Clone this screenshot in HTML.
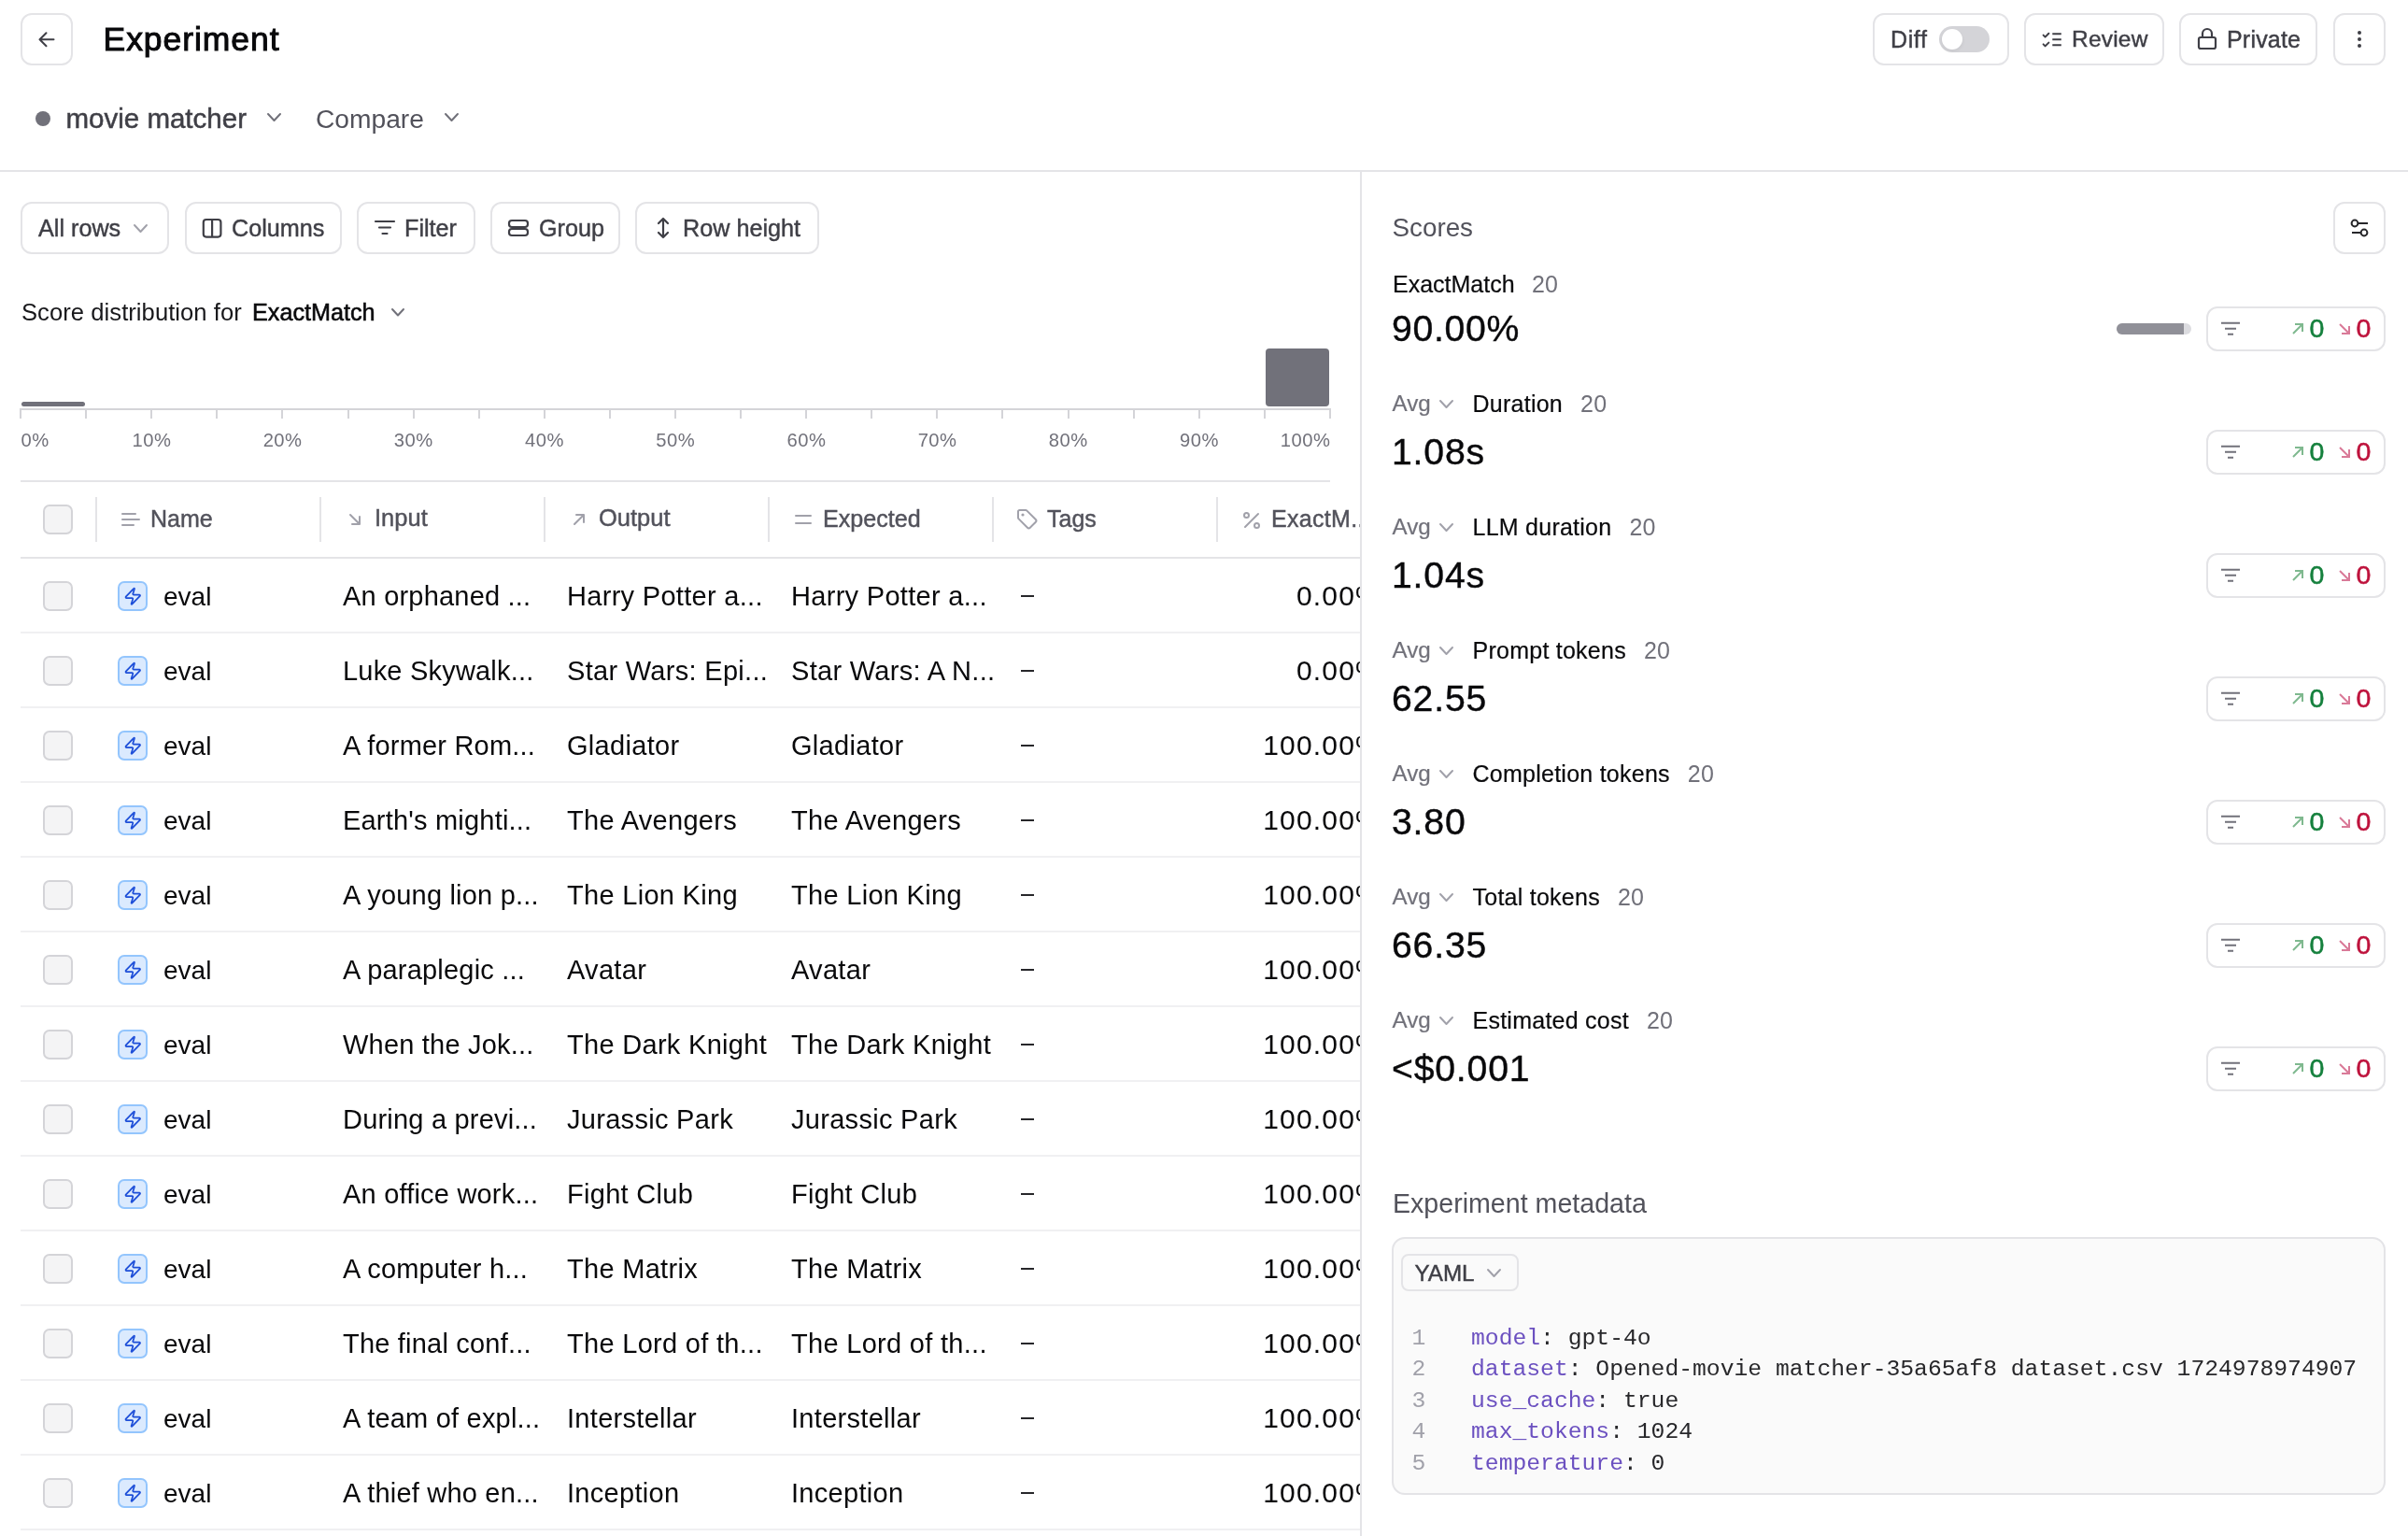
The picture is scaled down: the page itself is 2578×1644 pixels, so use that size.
<!DOCTYPE html>
<html><head><meta charset="utf-8"><title>Experiment</title>
<style>
html,body{margin:0;padding:0;background:#fff;}
body{width:2578px;height:1644px;position:relative;overflow:hidden;font-family:'Liberation Sans', sans-serif;}
.t{position:absolute;line-height:1;white-space:nowrap;}
#w{position:absolute;left:0;top:0;width:2578px;height:1644px;will-change:transform;}
.b{position:absolute;}
</style></head><body><div id="w">
<div class="b" style="left:22px;top:14px;width:56px;height:56px;border:2px solid #e4e4e7;border-radius:12px;box-sizing:border-box;"></div>
<svg class="b" style="left:39px;top:32px;" width="21" height="21" viewBox="0 0 21 21" fill="none"><path d="M18.5 10.2 H3.5 M10.5 3.2 L3.5 10.2 L10.5 17.2" stroke="#3f3f46" stroke-width="2" stroke-linecap="round" stroke-linejoin="round"/></svg>
<div class="t" style="left:110.50px;top:24.94px;font-size:35.5px;color:#09090b;font-weight:400;letter-spacing:0.95px;-webkit-text-stroke:1.0px #09090b;font-family:'Liberation Sans', sans-serif;">Experiment</div>
<div class="b" style="left:2005px;top:14px;width:146px;height:56px;border:2px solid #e4e4e7;border-radius:12px;box-sizing:border-box;"></div>
<div class="t" style="left:2024.00px;top:29.93px;font-size:25px;color:#3f3f46;font-weight:400;letter-spacing:0.6px;-webkit-text-stroke:0.45px #3f3f46;font-family:'Liberation Sans', sans-serif;">Diff</div>
<div class="b" style="left:2076px;top:28px;width:54px;height:28px;background:#d4d4d8;border-radius:14px;"></div>
<div class="b" style="left:2079px;top:31px;width:22px;height:22px;background:#fff;border-radius:50%;box-shadow:0 2px 4px rgba(0,0,0,0.06);"></div>
<div class="b" style="left:2167px;top:14px;width:150px;height:56px;border:2px solid #e4e4e7;border-radius:12px;box-sizing:border-box;"></div>
<svg class="b" style="left:2184px;top:33px;" width="26" height="20" viewBox="0 0 26 20" fill="none"><path d="M3.6 4.6 L5.6 6.6 L9.4 2.8 M3.6 14.4 L5.6 16.4 L9.4 12.6" stroke="#3f3f46" stroke-width="2" stroke-linecap="round" stroke-linejoin="round"/><path d="M13.3 3.3 H22.8 M13.3 9.2 H22.8 M13.3 15.3 H22.8" stroke="#3f3f46" stroke-width="2"/></svg>
<div class="t" style="left:2218.00px;top:30.36px;font-size:24.5px;color:#3f3f46;font-weight:400;letter-spacing:0.2px;-webkit-text-stroke:0.45px #3f3f46;font-family:'Liberation Sans', sans-serif;">Review</div>
<div class="b" style="left:2333px;top:14px;width:148px;height:56px;border:2px solid #e4e4e7;border-radius:12px;box-sizing:border-box;"></div>
<svg class="b" style="left:2351px;top:29px;" width="24" height="26" viewBox="0 0 24 26" fill="none"><rect x="3" y="11" width="18" height="12" rx="2" stroke="#3f3f46" stroke-width="2.2"/><path d="M7 11 V7 a5 5 0 0 1 10 0 V11" stroke="#3f3f46" stroke-width="2.2"/></svg>
<div class="t" style="left:2384.00px;top:29.93px;font-size:25px;color:#3f3f46;font-weight:400;letter-spacing:0.2px;-webkit-text-stroke:0.45px #3f3f46;font-family:'Liberation Sans', sans-serif;">Private</div>
<div class="b" style="left:2498px;top:14px;width:56px;height:56px;border:2px solid #e4e4e7;border-radius:12px;box-sizing:border-box;"></div>
<div class="b" style="left:2523.8px;top:33.0px;width:4.4px;height:4.4px;background:#3f3f46;border-radius:50%;"></div>
<div class="b" style="left:2523.8px;top:39.9px;width:4.4px;height:4.4px;background:#3f3f46;border-radius:50%;"></div>
<div class="b" style="left:2523.8px;top:46.9px;width:4.4px;height:4.4px;background:#3f3f46;border-radius:50%;"></div>
<div class="b" style="left:38px;top:119px;width:16px;height:16px;background:#71717a;border-radius:50%;"></div>
<div class="t" style="left:70.50px;top:111.72px;font-size:29.5px;color:#3f3f46;font-weight:400;letter-spacing:0px;-webkit-text-stroke:0.5px #3f3f46;font-family:'Liberation Sans', sans-serif;">movie matcher</div>
<svg class="b" style="left:285px;top:120px;" width="17" height="11" viewBox="0 0 17 11" fill="none"><path d="M2 2 L8.5 9 L15 2" stroke="#71717a" stroke-width="2" stroke-linecap="round" stroke-linejoin="round"/></svg>
<div class="t" style="left:338.00px;top:112.82px;font-size:28.2px;color:#52525b;font-weight:400;letter-spacing:0px;font-family:'Liberation Sans', sans-serif;">Compare</div>
<svg class="b" style="left:475px;top:120px;" width="17" height="11" viewBox="0 0 17 11" fill="none"><path d="M2 2 L8.5 9 L15 2" stroke="#71717a" stroke-width="2" stroke-linecap="round" stroke-linejoin="round"/></svg>
<div class="b" style="left:0px;top:182px;width:2578px;height:2px;background:#e4e4e7;"></div>
<div class="b" style="left:1456px;top:184px;width:2px;height:1460px;background:#e4e4e7;"></div>
<div class="b" style="left:22px;top:216px;width:159px;height:56px;border:2px solid #e4e4e7;border-radius:12px;box-sizing:border-box;"></div>
<div class="t" style="left:41.00px;top:231.86px;font-size:25.2px;color:#3f3f46;font-weight:400;letter-spacing:0px;-webkit-text-stroke:0.45px #3f3f46;font-family:'Liberation Sans', sans-serif;">All rows</div>
<svg class="b" style="left:142px;top:239px;" width="17" height="11" viewBox="0 0 17 11" fill="none"><path d="M2 2 L8.5 9 L15 2" stroke="#a1a1aa" stroke-width="2" stroke-linecap="round" stroke-linejoin="round"/></svg>
<div class="b" style="left:198px;top:216px;width:168px;height:56px;border:2px solid #e4e4e7;border-radius:12px;box-sizing:border-box;"></div>
<svg class="b" style="left:215px;top:232px;" width="24" height="24" viewBox="0 0 24 24" fill="none"><rect x="2.8" y="3" width="18.6" height="18.6" rx="3" stroke="#3f3f46" stroke-width="2.2"/><path d="M12.1 3 V21.6" stroke="#3f3f46" stroke-width="2.2"/></svg>
<div class="t" style="left:248.00px;top:231.86px;font-size:25.2px;color:#3f3f46;font-weight:400;letter-spacing:0px;-webkit-text-stroke:0.45px #3f3f46;font-family:'Liberation Sans', sans-serif;">Columns</div>
<div class="b" style="left:382px;top:216px;width:127px;height:56px;border:2px solid #e4e4e7;border-radius:12px;box-sizing:border-box;"></div>
<svg class="b" style="left:400px;top:235px;" width="24" height="18" viewBox="0 0 24 18" fill="none"><path d="M2 2 H22 M6 8.5 H18 M9.5 15 H14.5" stroke="#3f3f46" stroke-width="2.2" stroke-linecap="round"/></svg>
<div class="t" style="left:433.00px;top:231.86px;font-size:25.2px;color:#3f3f46;font-weight:400;letter-spacing:0px;-webkit-text-stroke:0.45px #3f3f46;font-family:'Liberation Sans', sans-serif;">Filter</div>
<div class="b" style="left:525px;top:216px;width:139px;height:56px;border:2px solid #e4e4e7;border-radius:12px;box-sizing:border-box;"></div>
<svg class="b" style="left:542px;top:233px;" width="26" height="22" viewBox="0 0 26 22" fill="none"><rect x="3" y="3" width="20" height="7" rx="3" stroke="#3f3f46" stroke-width="2.2"/><rect x="3" y="12" width="20" height="7" rx="3" stroke="#3f3f46" stroke-width="2.2"/></svg>
<div class="t" style="left:577.00px;top:231.86px;font-size:25.2px;color:#3f3f46;font-weight:400;letter-spacing:0px;-webkit-text-stroke:0.45px #3f3f46;font-family:'Liberation Sans', sans-serif;">Group</div>
<div class="b" style="left:680px;top:216px;width:197px;height:56px;border:2px solid #e4e4e7;border-radius:12px;box-sizing:border-box;"></div>
<svg class="b" style="left:701px;top:231px;" width="18" height="26" viewBox="0 0 18 26" fill="none"><path d="M9 3 V23 M4 8 L9 3 L14 8 M4 18 L9 23 L14 18" stroke="#3f3f46" stroke-width="2.2" stroke-linecap="round" stroke-linejoin="round"/></svg>
<div class="t" style="left:731.00px;top:231.86px;font-size:25.2px;color:#3f3f46;font-weight:400;letter-spacing:0px;-webkit-text-stroke:0.45px #3f3f46;font-family:'Liberation Sans', sans-serif;">Row height</div>
<div class="t" style="left:23.00px;top:321.62px;font-size:25.6px;color:#18181b;font-weight:400;letter-spacing:0.05px;font-family:'Liberation Sans', sans-serif;">Score distribution for</div>
<div class="t" style="left:270.00px;top:321.96px;font-size:25.2px;color:#09090b;font-weight:400;letter-spacing:0px;-webkit-text-stroke:0.55px #09090b;font-family:'Liberation Sans', sans-serif;">ExactMatch</div>
<svg class="b" style="left:418px;top:329px;" width="16" height="10.5" viewBox="0 0 16 10.5" fill="none"><path d="M2 2 L8.0 8.5 L14 2" stroke="#71717a" stroke-width="2" stroke-linecap="round" stroke-linejoin="round"/></svg>
<div class="b" style="left:22px;top:437px;width:1403px;height:2px;background:#d4d4d8;"></div>
<div class="b" style="left:21px;top:437px;width:2px;height:11px;background:#d4d4d8;"></div>
<div class="b" style="left:91px;top:437px;width:2px;height:11px;background:#d4d4d8;"></div>
<div class="b" style="left:161px;top:437px;width:2px;height:11px;background:#d4d4d8;"></div>
<div class="b" style="left:231px;top:437px;width:2px;height:11px;background:#d4d4d8;"></div>
<div class="b" style="left:301px;top:437px;width:2px;height:11px;background:#d4d4d8;"></div>
<div class="b" style="left:372px;top:437px;width:2px;height:11px;background:#d4d4d8;"></div>
<div class="b" style="left:442px;top:437px;width:2px;height:11px;background:#d4d4d8;"></div>
<div class="b" style="left:512px;top:437px;width:2px;height:11px;background:#d4d4d8;"></div>
<div class="b" style="left:582px;top:437px;width:2px;height:11px;background:#d4d4d8;"></div>
<div class="b" style="left:652px;top:437px;width:2px;height:11px;background:#d4d4d8;"></div>
<div class="b" style="left:722px;top:437px;width:2px;height:11px;background:#d4d4d8;"></div>
<div class="b" style="left:792px;top:437px;width:2px;height:11px;background:#d4d4d8;"></div>
<div class="b" style="left:862px;top:437px;width:2px;height:11px;background:#d4d4d8;"></div>
<div class="b" style="left:932px;top:437px;width:2px;height:11px;background:#d4d4d8;"></div>
<div class="b" style="left:1002px;top:437px;width:2px;height:11px;background:#d4d4d8;"></div>
<div class="b" style="left:1072px;top:437px;width:2px;height:11px;background:#d4d4d8;"></div>
<div class="b" style="left:1143px;top:437px;width:2px;height:11px;background:#d4d4d8;"></div>
<div class="b" style="left:1213px;top:437px;width:2px;height:11px;background:#d4d4d8;"></div>
<div class="b" style="left:1283px;top:437px;width:2px;height:11px;background:#d4d4d8;"></div>
<div class="b" style="left:1353px;top:437px;width:2px;height:11px;background:#d4d4d8;"></div>
<div class="b" style="left:1423px;top:437px;width:2px;height:11px;background:#d4d4d8;"></div>
<div class="b" style="left:23px;top:429.5px;width:68px;height:5.5px;background:#71717a;border-radius:3px;"></div>
<div class="b" style="left:1355px;top:373px;width:68px;height:62px;background:#71717a;border-radius:4px;"></div>
<div class="t" style="left:22.50px;top:461.00px;font-size:20.2px;color:#71717a;font-weight:400;letter-spacing:0.5px;font-family:'Liberation Sans', sans-serif;">0%</div>
<div class="t" style="left:62.4px;width:200px;text-align:center;top:461.00px;font-size:20.2px;letter-spacing:0.5px;color:#71717a;">10%</div>
<div class="t" style="left:202.6px;width:200px;text-align:center;top:461.00px;font-size:20.2px;letter-spacing:0.5px;color:#71717a;">20%</div>
<div class="t" style="left:342.8px;width:200px;text-align:center;top:461.00px;font-size:20.2px;letter-spacing:0.5px;color:#71717a;">30%</div>
<div class="t" style="left:483.0px;width:200px;text-align:center;top:461.00px;font-size:20.2px;letter-spacing:0.5px;color:#71717a;">40%</div>
<div class="t" style="left:623.2px;width:200px;text-align:center;top:461.00px;font-size:20.2px;letter-spacing:0.5px;color:#71717a;">50%</div>
<div class="t" style="left:763.4px;width:200px;text-align:center;top:461.00px;font-size:20.2px;letter-spacing:0.5px;color:#71717a;">60%</div>
<div class="t" style="left:903.6px;width:200px;text-align:center;top:461.00px;font-size:20.2px;letter-spacing:0.5px;color:#71717a;">70%</div>
<div class="t" style="left:1043.8px;width:200px;text-align:center;top:461.00px;font-size:20.2px;letter-spacing:0.5px;color:#71717a;">80%</div>
<div class="t" style="left:1184.0px;width:200px;text-align:center;top:461.00px;font-size:20.2px;letter-spacing:0.5px;color:#71717a;">90%</div>
<div class="t" style="left:1124.5px;width:300px;text-align:right;top:461.00px;font-size:20.2px;letter-spacing:0.5px;color:#71717a;">100%</div>
<div class="b" style="left:22px;top:514px;width:1402px;height:2px;background:#e4e4e7;"></div>
<div class="b" style="left:46px;top:540px;width:32px;height:32px;border:2px solid #d4d4d8;background:#f4f4f5;border-radius:7px;box-sizing:border-box;"></div>
<div class="b" style="left:102px;top:532px;width:2px;height:48px;background:#e4e4e7;"></div>
<div class="b" style="left:342px;top:532px;width:2px;height:48px;background:#e4e4e7;"></div>
<div class="b" style="left:582px;top:532px;width:2px;height:48px;background:#e4e4e7;"></div>
<div class="b" style="left:822px;top:532px;width:2px;height:48px;background:#e4e4e7;"></div>
<div class="b" style="left:1062px;top:532px;width:2px;height:48px;background:#e4e4e7;"></div>
<div class="b" style="left:1302px;top:532px;width:2px;height:48px;background:#e4e4e7;"></div>
<svg class="b" style="left:128px;top:547px;" width="24" height="18" viewBox="0 0 24 18" fill="none"><path d="M3 3 H17 M3 9 H21 M3 15 H15" stroke="#a1a1aa" stroke-width="2" stroke-linecap="round"/></svg>
<div class="t" style="left:161.00px;top:542.83px;font-size:25px;color:#52525b;font-weight:400;letter-spacing:0px;-webkit-text-stroke:0.45px #52525b;font-family:'Liberation Sans', sans-serif;">Name</div>
<svg class="b" style="left:371px;top:547px;" width="18" height="18" viewBox="0 0 18 18" fill="none"><path d="M4 4 L14 14 M14 6 V14 H6" stroke="#a1a1aa" stroke-width="2" stroke-linecap="round" stroke-linejoin="round"/></svg>
<div class="t" style="left:401.00px;top:542.41px;font-size:25.5px;color:#52525b;font-weight:400;letter-spacing:0px;-webkit-text-stroke:0.45px #52525b;font-family:'Liberation Sans', sans-serif;">Input</div>
<svg class="b" style="left:611px;top:547px;" width="18" height="18" viewBox="0 0 18 18" fill="none"><path d="M4 14 L14 4 M6 4 H14 V12" stroke="#a1a1aa" stroke-width="2" stroke-linecap="round" stroke-linejoin="round"/></svg>
<div class="t" style="left:641.00px;top:542.41px;font-size:25.5px;color:#52525b;font-weight:400;letter-spacing:0px;-webkit-text-stroke:0.45px #52525b;font-family:'Liberation Sans', sans-serif;">Output</div>
<svg class="b" style="left:849px;top:548px;" width="22" height="16" viewBox="0 0 22 16" fill="none"><path d="M3 4 H19 M3 12 H19" stroke="#a1a1aa" stroke-width="2" stroke-linecap="round"/></svg>
<div class="t" style="left:881.00px;top:542.75px;font-size:25.1px;color:#52525b;font-weight:400;letter-spacing:0px;-webkit-text-stroke:0.45px #52525b;font-family:'Liberation Sans', sans-serif;">Expected</div>
<svg class="b" style="left:1087px;top:543px;" width="26" height="26" viewBox="0 0 26 26" fill="none"><path d="M3 4.5 V11 a2 2 0 0 0 .6 1.4 L13 21.8 a2 2 0 0 0 2.8 0 L21.8 15.8 a2 2 0 0 0 0-2.8 L12.4 3.6 A2 2 0 0 0 11 3 H4.5 A1.5 1.5 0 0 0 3 4.5 Z" stroke="#a1a1aa" stroke-width="2" stroke-linejoin="round"/><circle cx="8" cy="8" r="1.6" fill="#a1a1aa"/></svg>
<div class="t" style="left:1121.00px;top:542.83px;font-size:25px;color:#52525b;font-weight:400;letter-spacing:0px;-webkit-text-stroke:0.45px #52525b;font-family:'Liberation Sans', sans-serif;">Tags</div>
<svg class="b" style="left:1328px;top:545px;" width="24" height="24" viewBox="0 0 24 24" fill="none"><path d="M19 5 L5 19" stroke="#a1a1aa" stroke-width="2" stroke-linecap="round"/><circle cx="6.5" cy="6.5" r="2.5" stroke="#a1a1aa" stroke-width="2"/><circle cx="17.5" cy="17.5" r="2.5" stroke="#a1a1aa" stroke-width="2"/></svg>
<div class="b" style="left:1302px;top:520px;width:154px;height:70px;overflow:hidden;"><div class="t" style="left:59.00px;top:22.83px;font-size:25px;color:#52525b;font-weight:400;letter-spacing:0.3px;-webkit-text-stroke:0.45px #52525b;font-family:'Liberation Sans', sans-serif;">ExactM...</div></div>
<div class="b" style="left:22px;top:596px;width:1434px;height:2px;background:#e4e4e7;"></div>
<div class="b" style="left:46px;top:622px;width:32px;height:32px;border:2px solid #d4d4d8;background:#f4f4f5;border-radius:7px;box-sizing:border-box;"></div>
<div class="b" style="left:126px;top:622px;width:32px;height:32px;border:2px solid #93c5fd;background:#dbeafe;border-radius:7px;box-sizing:border-box;"></div>
<svg class="b" style="left:132.1px;top:628.2px" width="20.6" height="20.6" viewBox="0 0 24 24" fill="none"><path d="M4 14a1 1 0 0 1-.78-1.63l9.9-10.2a.5.5 0 0 1 .86.46l-1.920 6.02A1 1 0 0 0 13 10h7a1 1 0 0 1 .78 1.63l-9.9 10.2a.5.5 0 0 1-.86-.46l1.92-6.020A1 1 0 0 0 11 14z" stroke="#1d4ed8" stroke-width="2.05" stroke-linecap="round" stroke-linejoin="round"/></svg>
<div class="t" style="left:175.00px;top:624.59px;font-size:28px;color:#09090b;font-weight:400;letter-spacing:0px;font-family:'Liberation Sans', sans-serif;">eval</div>
<div class="t" style="left:367.00px;top:623.75px;font-size:29.0px;color:#09090b;font-weight:400;letter-spacing:0.2px;font-family:'Liberation Sans', sans-serif;">An orphaned ...</div>
<div class="t" style="left:607.00px;top:623.75px;font-size:29.0px;color:#09090b;font-weight:400;letter-spacing:0.3px;font-family:'Liberation Sans', sans-serif;">Harry Potter a...</div>
<div class="t" style="left:847.00px;top:623.75px;font-size:29.0px;color:#09090b;font-weight:400;letter-spacing:0.3px;font-family:'Liberation Sans', sans-serif;">Harry Potter a...</div>
<div class="b" style="left:1093px;top:637px;width:14px;height:2px;background:#27272a;"></div>
<div class="b" style="left:1302px;top:598px;width:154px;height:78px;overflow:hidden;"><div class="t" style="right:-23px;top:24.90px;font-size:30px;color:#09090b;letter-spacing:1.2px;">0.00%</div></div>
<div class="b" style="left:22px;top:676px;width:1434px;height:2px;background:#f0f0f2;"></div>
<div class="b" style="left:46px;top:702px;width:32px;height:32px;border:2px solid #d4d4d8;background:#f4f4f5;border-radius:7px;box-sizing:border-box;"></div>
<div class="b" style="left:126px;top:702px;width:32px;height:32px;border:2px solid #93c5fd;background:#dbeafe;border-radius:7px;box-sizing:border-box;"></div>
<svg class="b" style="left:132.1px;top:708.2px" width="20.6" height="20.6" viewBox="0 0 24 24" fill="none"><path d="M4 14a1 1 0 0 1-.78-1.63l9.9-10.2a.5.5 0 0 1 .86.46l-1.920 6.02A1 1 0 0 0 13 10h7a1 1 0 0 1 .78 1.63l-9.9 10.2a.5.5 0 0 1-.86-.46l1.92-6.020A1 1 0 0 0 11 14z" stroke="#1d4ed8" stroke-width="2.05" stroke-linecap="round" stroke-linejoin="round"/></svg>
<div class="t" style="left:175.00px;top:704.59px;font-size:28px;color:#09090b;font-weight:400;letter-spacing:0px;font-family:'Liberation Sans', sans-serif;">eval</div>
<div class="t" style="left:367.00px;top:703.75px;font-size:29.0px;color:#09090b;font-weight:400;letter-spacing:0.2px;font-family:'Liberation Sans', sans-serif;">Luke Skywalk...</div>
<div class="t" style="left:607.00px;top:703.75px;font-size:29.0px;color:#09090b;font-weight:400;letter-spacing:0.3px;font-family:'Liberation Sans', sans-serif;">Star Wars: Epi...</div>
<div class="t" style="left:847.00px;top:703.75px;font-size:29.0px;color:#09090b;font-weight:400;letter-spacing:0.3px;font-family:'Liberation Sans', sans-serif;">Star Wars: A N...</div>
<div class="b" style="left:1093px;top:717px;width:14px;height:2px;background:#27272a;"></div>
<div class="b" style="left:1302px;top:678px;width:154px;height:78px;overflow:hidden;"><div class="t" style="right:-23px;top:24.90px;font-size:30px;color:#09090b;letter-spacing:1.2px;">0.00%</div></div>
<div class="b" style="left:22px;top:756px;width:1434px;height:2px;background:#f0f0f2;"></div>
<div class="b" style="left:46px;top:782px;width:32px;height:32px;border:2px solid #d4d4d8;background:#f4f4f5;border-radius:7px;box-sizing:border-box;"></div>
<div class="b" style="left:126px;top:782px;width:32px;height:32px;border:2px solid #93c5fd;background:#dbeafe;border-radius:7px;box-sizing:border-box;"></div>
<svg class="b" style="left:132.1px;top:788.2px" width="20.6" height="20.6" viewBox="0 0 24 24" fill="none"><path d="M4 14a1 1 0 0 1-.78-1.63l9.9-10.2a.5.5 0 0 1 .86.46l-1.920 6.02A1 1 0 0 0 13 10h7a1 1 0 0 1 .78 1.63l-9.9 10.2a.5.5 0 0 1-.86-.46l1.92-6.020A1 1 0 0 0 11 14z" stroke="#1d4ed8" stroke-width="2.05" stroke-linecap="round" stroke-linejoin="round"/></svg>
<div class="t" style="left:175.00px;top:784.59px;font-size:28px;color:#09090b;font-weight:400;letter-spacing:0px;font-family:'Liberation Sans', sans-serif;">eval</div>
<div class="t" style="left:367.00px;top:783.75px;font-size:29.0px;color:#09090b;font-weight:400;letter-spacing:0.2px;font-family:'Liberation Sans', sans-serif;">A former Rom...</div>
<div class="t" style="left:607.00px;top:783.75px;font-size:29.0px;color:#09090b;font-weight:400;letter-spacing:0.3px;font-family:'Liberation Sans', sans-serif;">Gladiator</div>
<div class="t" style="left:847.00px;top:783.75px;font-size:29.0px;color:#09090b;font-weight:400;letter-spacing:0.3px;font-family:'Liberation Sans', sans-serif;">Gladiator</div>
<div class="b" style="left:1093px;top:797px;width:14px;height:2px;background:#27272a;"></div>
<div class="b" style="left:1302px;top:758px;width:154px;height:78px;overflow:hidden;"><div class="t" style="right:-23px;top:24.90px;font-size:30px;color:#09090b;letter-spacing:1.2px;">100.00%</div></div>
<div class="b" style="left:22px;top:836px;width:1434px;height:2px;background:#f0f0f2;"></div>
<div class="b" style="left:46px;top:862px;width:32px;height:32px;border:2px solid #d4d4d8;background:#f4f4f5;border-radius:7px;box-sizing:border-box;"></div>
<div class="b" style="left:126px;top:862px;width:32px;height:32px;border:2px solid #93c5fd;background:#dbeafe;border-radius:7px;box-sizing:border-box;"></div>
<svg class="b" style="left:132.1px;top:868.2px" width="20.6" height="20.6" viewBox="0 0 24 24" fill="none"><path d="M4 14a1 1 0 0 1-.78-1.63l9.9-10.2a.5.5 0 0 1 .86.46l-1.920 6.02A1 1 0 0 0 13 10h7a1 1 0 0 1 .78 1.63l-9.9 10.2a.5.5 0 0 1-.86-.46l1.92-6.020A1 1 0 0 0 11 14z" stroke="#1d4ed8" stroke-width="2.05" stroke-linecap="round" stroke-linejoin="round"/></svg>
<div class="t" style="left:175.00px;top:864.59px;font-size:28px;color:#09090b;font-weight:400;letter-spacing:0px;font-family:'Liberation Sans', sans-serif;">eval</div>
<div class="t" style="left:367.00px;top:863.75px;font-size:29.0px;color:#09090b;font-weight:400;letter-spacing:0.2px;font-family:'Liberation Sans', sans-serif;">Earth's mighti...</div>
<div class="t" style="left:607.00px;top:863.75px;font-size:29.0px;color:#09090b;font-weight:400;letter-spacing:0.3px;font-family:'Liberation Sans', sans-serif;">The Avengers</div>
<div class="t" style="left:847.00px;top:863.75px;font-size:29.0px;color:#09090b;font-weight:400;letter-spacing:0.3px;font-family:'Liberation Sans', sans-serif;">The Avengers</div>
<div class="b" style="left:1093px;top:877px;width:14px;height:2px;background:#27272a;"></div>
<div class="b" style="left:1302px;top:838px;width:154px;height:78px;overflow:hidden;"><div class="t" style="right:-23px;top:24.90px;font-size:30px;color:#09090b;letter-spacing:1.2px;">100.00%</div></div>
<div class="b" style="left:22px;top:916px;width:1434px;height:2px;background:#f0f0f2;"></div>
<div class="b" style="left:46px;top:942px;width:32px;height:32px;border:2px solid #d4d4d8;background:#f4f4f5;border-radius:7px;box-sizing:border-box;"></div>
<div class="b" style="left:126px;top:942px;width:32px;height:32px;border:2px solid #93c5fd;background:#dbeafe;border-radius:7px;box-sizing:border-box;"></div>
<svg class="b" style="left:132.1px;top:948.2px" width="20.6" height="20.6" viewBox="0 0 24 24" fill="none"><path d="M4 14a1 1 0 0 1-.78-1.63l9.9-10.2a.5.5 0 0 1 .86.46l-1.920 6.02A1 1 0 0 0 13 10h7a1 1 0 0 1 .78 1.63l-9.9 10.2a.5.5 0 0 1-.86-.46l1.92-6.020A1 1 0 0 0 11 14z" stroke="#1d4ed8" stroke-width="2.05" stroke-linecap="round" stroke-linejoin="round"/></svg>
<div class="t" style="left:175.00px;top:944.59px;font-size:28px;color:#09090b;font-weight:400;letter-spacing:0px;font-family:'Liberation Sans', sans-serif;">eval</div>
<div class="t" style="left:367.00px;top:943.75px;font-size:29.0px;color:#09090b;font-weight:400;letter-spacing:0.2px;font-family:'Liberation Sans', sans-serif;">A young lion p...</div>
<div class="t" style="left:607.00px;top:943.75px;font-size:29.0px;color:#09090b;font-weight:400;letter-spacing:0.3px;font-family:'Liberation Sans', sans-serif;">The Lion King</div>
<div class="t" style="left:847.00px;top:943.75px;font-size:29.0px;color:#09090b;font-weight:400;letter-spacing:0.3px;font-family:'Liberation Sans', sans-serif;">The Lion King</div>
<div class="b" style="left:1093px;top:957px;width:14px;height:2px;background:#27272a;"></div>
<div class="b" style="left:1302px;top:918px;width:154px;height:78px;overflow:hidden;"><div class="t" style="right:-23px;top:24.90px;font-size:30px;color:#09090b;letter-spacing:1.2px;">100.00%</div></div>
<div class="b" style="left:22px;top:996px;width:1434px;height:2px;background:#f0f0f2;"></div>
<div class="b" style="left:46px;top:1022px;width:32px;height:32px;border:2px solid #d4d4d8;background:#f4f4f5;border-radius:7px;box-sizing:border-box;"></div>
<div class="b" style="left:126px;top:1022px;width:32px;height:32px;border:2px solid #93c5fd;background:#dbeafe;border-radius:7px;box-sizing:border-box;"></div>
<svg class="b" style="left:132.1px;top:1028.2px" width="20.6" height="20.6" viewBox="0 0 24 24" fill="none"><path d="M4 14a1 1 0 0 1-.78-1.63l9.9-10.2a.5.5 0 0 1 .86.46l-1.920 6.02A1 1 0 0 0 13 10h7a1 1 0 0 1 .78 1.63l-9.9 10.2a.5.5 0 0 1-.86-.46l1.92-6.020A1 1 0 0 0 11 14z" stroke="#1d4ed8" stroke-width="2.05" stroke-linecap="round" stroke-linejoin="round"/></svg>
<div class="t" style="left:175.00px;top:1024.59px;font-size:28px;color:#09090b;font-weight:400;letter-spacing:0px;font-family:'Liberation Sans', sans-serif;">eval</div>
<div class="t" style="left:367.00px;top:1023.75px;font-size:29.0px;color:#09090b;font-weight:400;letter-spacing:0.2px;font-family:'Liberation Sans', sans-serif;">A paraplegic ...</div>
<div class="t" style="left:607.00px;top:1023.75px;font-size:29.0px;color:#09090b;font-weight:400;letter-spacing:0.3px;font-family:'Liberation Sans', sans-serif;">Avatar</div>
<div class="t" style="left:847.00px;top:1023.75px;font-size:29.0px;color:#09090b;font-weight:400;letter-spacing:0.3px;font-family:'Liberation Sans', sans-serif;">Avatar</div>
<div class="b" style="left:1093px;top:1037px;width:14px;height:2px;background:#27272a;"></div>
<div class="b" style="left:1302px;top:998px;width:154px;height:78px;overflow:hidden;"><div class="t" style="right:-23px;top:24.90px;font-size:30px;color:#09090b;letter-spacing:1.2px;">100.00%</div></div>
<div class="b" style="left:22px;top:1076px;width:1434px;height:2px;background:#f0f0f2;"></div>
<div class="b" style="left:46px;top:1102px;width:32px;height:32px;border:2px solid #d4d4d8;background:#f4f4f5;border-radius:7px;box-sizing:border-box;"></div>
<div class="b" style="left:126px;top:1102px;width:32px;height:32px;border:2px solid #93c5fd;background:#dbeafe;border-radius:7px;box-sizing:border-box;"></div>
<svg class="b" style="left:132.1px;top:1108.2px" width="20.6" height="20.6" viewBox="0 0 24 24" fill="none"><path d="M4 14a1 1 0 0 1-.78-1.63l9.9-10.2a.5.5 0 0 1 .86.46l-1.920 6.02A1 1 0 0 0 13 10h7a1 1 0 0 1 .78 1.63l-9.9 10.2a.5.5 0 0 1-.86-.46l1.92-6.020A1 1 0 0 0 11 14z" stroke="#1d4ed8" stroke-width="2.05" stroke-linecap="round" stroke-linejoin="round"/></svg>
<div class="t" style="left:175.00px;top:1104.59px;font-size:28px;color:#09090b;font-weight:400;letter-spacing:0px;font-family:'Liberation Sans', sans-serif;">eval</div>
<div class="t" style="left:367.00px;top:1103.75px;font-size:29.0px;color:#09090b;font-weight:400;letter-spacing:0.2px;font-family:'Liberation Sans', sans-serif;">When the Jok...</div>
<div class="t" style="left:607.00px;top:1103.75px;font-size:29.0px;color:#09090b;font-weight:400;letter-spacing:0.3px;font-family:'Liberation Sans', sans-serif;">The Dark Knight</div>
<div class="t" style="left:847.00px;top:1103.75px;font-size:29.0px;color:#09090b;font-weight:400;letter-spacing:0.3px;font-family:'Liberation Sans', sans-serif;">The Dark Knight</div>
<div class="b" style="left:1093px;top:1117px;width:14px;height:2px;background:#27272a;"></div>
<div class="b" style="left:1302px;top:1078px;width:154px;height:78px;overflow:hidden;"><div class="t" style="right:-23px;top:24.90px;font-size:30px;color:#09090b;letter-spacing:1.2px;">100.00%</div></div>
<div class="b" style="left:22px;top:1156px;width:1434px;height:2px;background:#f0f0f2;"></div>
<div class="b" style="left:46px;top:1182px;width:32px;height:32px;border:2px solid #d4d4d8;background:#f4f4f5;border-radius:7px;box-sizing:border-box;"></div>
<div class="b" style="left:126px;top:1182px;width:32px;height:32px;border:2px solid #93c5fd;background:#dbeafe;border-radius:7px;box-sizing:border-box;"></div>
<svg class="b" style="left:132.1px;top:1188.2px" width="20.6" height="20.6" viewBox="0 0 24 24" fill="none"><path d="M4 14a1 1 0 0 1-.78-1.63l9.9-10.2a.5.5 0 0 1 .86.46l-1.920 6.02A1 1 0 0 0 13 10h7a1 1 0 0 1 .78 1.63l-9.9 10.2a.5.5 0 0 1-.86-.46l1.92-6.020A1 1 0 0 0 11 14z" stroke="#1d4ed8" stroke-width="2.05" stroke-linecap="round" stroke-linejoin="round"/></svg>
<div class="t" style="left:175.00px;top:1184.59px;font-size:28px;color:#09090b;font-weight:400;letter-spacing:0px;font-family:'Liberation Sans', sans-serif;">eval</div>
<div class="t" style="left:367.00px;top:1183.75px;font-size:29.0px;color:#09090b;font-weight:400;letter-spacing:0.2px;font-family:'Liberation Sans', sans-serif;">During a previ...</div>
<div class="t" style="left:607.00px;top:1183.75px;font-size:29.0px;color:#09090b;font-weight:400;letter-spacing:0.3px;font-family:'Liberation Sans', sans-serif;">Jurassic Park</div>
<div class="t" style="left:847.00px;top:1183.75px;font-size:29.0px;color:#09090b;font-weight:400;letter-spacing:0.3px;font-family:'Liberation Sans', sans-serif;">Jurassic Park</div>
<div class="b" style="left:1093px;top:1197px;width:14px;height:2px;background:#27272a;"></div>
<div class="b" style="left:1302px;top:1158px;width:154px;height:78px;overflow:hidden;"><div class="t" style="right:-23px;top:24.90px;font-size:30px;color:#09090b;letter-spacing:1.2px;">100.00%</div></div>
<div class="b" style="left:22px;top:1236px;width:1434px;height:2px;background:#f0f0f2;"></div>
<div class="b" style="left:46px;top:1262px;width:32px;height:32px;border:2px solid #d4d4d8;background:#f4f4f5;border-radius:7px;box-sizing:border-box;"></div>
<div class="b" style="left:126px;top:1262px;width:32px;height:32px;border:2px solid #93c5fd;background:#dbeafe;border-radius:7px;box-sizing:border-box;"></div>
<svg class="b" style="left:132.1px;top:1268.2px" width="20.6" height="20.6" viewBox="0 0 24 24" fill="none"><path d="M4 14a1 1 0 0 1-.78-1.63l9.9-10.2a.5.5 0 0 1 .86.46l-1.920 6.02A1 1 0 0 0 13 10h7a1 1 0 0 1 .78 1.63l-9.9 10.2a.5.5 0 0 1-.86-.46l1.92-6.020A1 1 0 0 0 11 14z" stroke="#1d4ed8" stroke-width="2.05" stroke-linecap="round" stroke-linejoin="round"/></svg>
<div class="t" style="left:175.00px;top:1264.59px;font-size:28px;color:#09090b;font-weight:400;letter-spacing:0px;font-family:'Liberation Sans', sans-serif;">eval</div>
<div class="t" style="left:367.00px;top:1263.75px;font-size:29.0px;color:#09090b;font-weight:400;letter-spacing:0.2px;font-family:'Liberation Sans', sans-serif;">An office work...</div>
<div class="t" style="left:607.00px;top:1263.75px;font-size:29.0px;color:#09090b;font-weight:400;letter-spacing:0.3px;font-family:'Liberation Sans', sans-serif;">Fight Club</div>
<div class="t" style="left:847.00px;top:1263.75px;font-size:29.0px;color:#09090b;font-weight:400;letter-spacing:0.3px;font-family:'Liberation Sans', sans-serif;">Fight Club</div>
<div class="b" style="left:1093px;top:1277px;width:14px;height:2px;background:#27272a;"></div>
<div class="b" style="left:1302px;top:1238px;width:154px;height:78px;overflow:hidden;"><div class="t" style="right:-23px;top:24.90px;font-size:30px;color:#09090b;letter-spacing:1.2px;">100.00%</div></div>
<div class="b" style="left:22px;top:1316px;width:1434px;height:2px;background:#f0f0f2;"></div>
<div class="b" style="left:46px;top:1342px;width:32px;height:32px;border:2px solid #d4d4d8;background:#f4f4f5;border-radius:7px;box-sizing:border-box;"></div>
<div class="b" style="left:126px;top:1342px;width:32px;height:32px;border:2px solid #93c5fd;background:#dbeafe;border-radius:7px;box-sizing:border-box;"></div>
<svg class="b" style="left:132.1px;top:1348.2px" width="20.6" height="20.6" viewBox="0 0 24 24" fill="none"><path d="M4 14a1 1 0 0 1-.78-1.63l9.9-10.2a.5.5 0 0 1 .86.46l-1.920 6.02A1 1 0 0 0 13 10h7a1 1 0 0 1 .78 1.63l-9.9 10.2a.5.5 0 0 1-.86-.46l1.92-6.020A1 1 0 0 0 11 14z" stroke="#1d4ed8" stroke-width="2.05" stroke-linecap="round" stroke-linejoin="round"/></svg>
<div class="t" style="left:175.00px;top:1344.59px;font-size:28px;color:#09090b;font-weight:400;letter-spacing:0px;font-family:'Liberation Sans', sans-serif;">eval</div>
<div class="t" style="left:367.00px;top:1343.75px;font-size:29.0px;color:#09090b;font-weight:400;letter-spacing:0.2px;font-family:'Liberation Sans', sans-serif;">A computer h...</div>
<div class="t" style="left:607.00px;top:1343.75px;font-size:29.0px;color:#09090b;font-weight:400;letter-spacing:0.3px;font-family:'Liberation Sans', sans-serif;">The Matrix</div>
<div class="t" style="left:847.00px;top:1343.75px;font-size:29.0px;color:#09090b;font-weight:400;letter-spacing:0.3px;font-family:'Liberation Sans', sans-serif;">The Matrix</div>
<div class="b" style="left:1093px;top:1357px;width:14px;height:2px;background:#27272a;"></div>
<div class="b" style="left:1302px;top:1318px;width:154px;height:78px;overflow:hidden;"><div class="t" style="right:-23px;top:24.90px;font-size:30px;color:#09090b;letter-spacing:1.2px;">100.00%</div></div>
<div class="b" style="left:22px;top:1396px;width:1434px;height:2px;background:#f0f0f2;"></div>
<div class="b" style="left:46px;top:1422px;width:32px;height:32px;border:2px solid #d4d4d8;background:#f4f4f5;border-radius:7px;box-sizing:border-box;"></div>
<div class="b" style="left:126px;top:1422px;width:32px;height:32px;border:2px solid #93c5fd;background:#dbeafe;border-radius:7px;box-sizing:border-box;"></div>
<svg class="b" style="left:132.1px;top:1428.2px" width="20.6" height="20.6" viewBox="0 0 24 24" fill="none"><path d="M4 14a1 1 0 0 1-.78-1.63l9.9-10.2a.5.5 0 0 1 .86.46l-1.920 6.02A1 1 0 0 0 13 10h7a1 1 0 0 1 .78 1.63l-9.9 10.2a.5.5 0 0 1-.86-.46l1.92-6.020A1 1 0 0 0 11 14z" stroke="#1d4ed8" stroke-width="2.05" stroke-linecap="round" stroke-linejoin="round"/></svg>
<div class="t" style="left:175.00px;top:1424.59px;font-size:28px;color:#09090b;font-weight:400;letter-spacing:0px;font-family:'Liberation Sans', sans-serif;">eval</div>
<div class="t" style="left:367.00px;top:1423.75px;font-size:29.0px;color:#09090b;font-weight:400;letter-spacing:0.2px;font-family:'Liberation Sans', sans-serif;">The final conf...</div>
<div class="t" style="left:607.00px;top:1423.75px;font-size:29.0px;color:#09090b;font-weight:400;letter-spacing:0.3px;font-family:'Liberation Sans', sans-serif;">The Lord of th...</div>
<div class="t" style="left:847.00px;top:1423.75px;font-size:29.0px;color:#09090b;font-weight:400;letter-spacing:0.3px;font-family:'Liberation Sans', sans-serif;">The Lord of th...</div>
<div class="b" style="left:1093px;top:1437px;width:14px;height:2px;background:#27272a;"></div>
<div class="b" style="left:1302px;top:1398px;width:154px;height:78px;overflow:hidden;"><div class="t" style="right:-23px;top:24.90px;font-size:30px;color:#09090b;letter-spacing:1.2px;">100.00%</div></div>
<div class="b" style="left:22px;top:1476px;width:1434px;height:2px;background:#f0f0f2;"></div>
<div class="b" style="left:46px;top:1502px;width:32px;height:32px;border:2px solid #d4d4d8;background:#f4f4f5;border-radius:7px;box-sizing:border-box;"></div>
<div class="b" style="left:126px;top:1502px;width:32px;height:32px;border:2px solid #93c5fd;background:#dbeafe;border-radius:7px;box-sizing:border-box;"></div>
<svg class="b" style="left:132.1px;top:1508.2px" width="20.6" height="20.6" viewBox="0 0 24 24" fill="none"><path d="M4 14a1 1 0 0 1-.78-1.63l9.9-10.2a.5.5 0 0 1 .86.46l-1.920 6.02A1 1 0 0 0 13 10h7a1 1 0 0 1 .78 1.63l-9.9 10.2a.5.5 0 0 1-.86-.46l1.92-6.020A1 1 0 0 0 11 14z" stroke="#1d4ed8" stroke-width="2.05" stroke-linecap="round" stroke-linejoin="round"/></svg>
<div class="t" style="left:175.00px;top:1504.59px;font-size:28px;color:#09090b;font-weight:400;letter-spacing:0px;font-family:'Liberation Sans', sans-serif;">eval</div>
<div class="t" style="left:367.00px;top:1503.75px;font-size:29.0px;color:#09090b;font-weight:400;letter-spacing:0.2px;font-family:'Liberation Sans', sans-serif;">A team of expl...</div>
<div class="t" style="left:607.00px;top:1503.75px;font-size:29.0px;color:#09090b;font-weight:400;letter-spacing:0.3px;font-family:'Liberation Sans', sans-serif;">Interstellar</div>
<div class="t" style="left:847.00px;top:1503.75px;font-size:29.0px;color:#09090b;font-weight:400;letter-spacing:0.3px;font-family:'Liberation Sans', sans-serif;">Interstellar</div>
<div class="b" style="left:1093px;top:1517px;width:14px;height:2px;background:#27272a;"></div>
<div class="b" style="left:1302px;top:1478px;width:154px;height:78px;overflow:hidden;"><div class="t" style="right:-23px;top:24.90px;font-size:30px;color:#09090b;letter-spacing:1.2px;">100.00%</div></div>
<div class="b" style="left:22px;top:1556px;width:1434px;height:2px;background:#f0f0f2;"></div>
<div class="b" style="left:46px;top:1582px;width:32px;height:32px;border:2px solid #d4d4d8;background:#f4f4f5;border-radius:7px;box-sizing:border-box;"></div>
<div class="b" style="left:126px;top:1582px;width:32px;height:32px;border:2px solid #93c5fd;background:#dbeafe;border-radius:7px;box-sizing:border-box;"></div>
<svg class="b" style="left:132.1px;top:1588.2px" width="20.6" height="20.6" viewBox="0 0 24 24" fill="none"><path d="M4 14a1 1 0 0 1-.78-1.63l9.9-10.2a.5.5 0 0 1 .86.46l-1.920 6.02A1 1 0 0 0 13 10h7a1 1 0 0 1 .78 1.63l-9.9 10.2a.5.5 0 0 1-.86-.46l1.92-6.020A1 1 0 0 0 11 14z" stroke="#1d4ed8" stroke-width="2.05" stroke-linecap="round" stroke-linejoin="round"/></svg>
<div class="t" style="left:175.00px;top:1584.59px;font-size:28px;color:#09090b;font-weight:400;letter-spacing:0px;font-family:'Liberation Sans', sans-serif;">eval</div>
<div class="t" style="left:367.00px;top:1583.75px;font-size:29.0px;color:#09090b;font-weight:400;letter-spacing:0.2px;font-family:'Liberation Sans', sans-serif;">A thief who en...</div>
<div class="t" style="left:607.00px;top:1583.75px;font-size:29.0px;color:#09090b;font-weight:400;letter-spacing:0.3px;font-family:'Liberation Sans', sans-serif;">Inception</div>
<div class="t" style="left:847.00px;top:1583.75px;font-size:29.0px;color:#09090b;font-weight:400;letter-spacing:0.3px;font-family:'Liberation Sans', sans-serif;">Inception</div>
<div class="b" style="left:1093px;top:1597px;width:14px;height:2px;background:#27272a;"></div>
<div class="b" style="left:1302px;top:1558px;width:154px;height:78px;overflow:hidden;"><div class="t" style="right:-23px;top:24.90px;font-size:30px;color:#09090b;letter-spacing:1.2px;">100.00%</div></div>
<div class="b" style="left:22px;top:1636px;width:1434px;height:2px;background:#f0f0f2;"></div>
<div class="t" style="left:1490.50px;top:230.36px;font-size:27.8px;color:#52525b;font-weight:400;letter-spacing:0px;font-family:'Liberation Sans', sans-serif;">Scores</div>
<div class="b" style="left:2498px;top:216px;width:56px;height:56px;border:2px solid #e4e4e7;border-radius:12px;box-sizing:border-box;"></div>
<svg class="b" style="left:2512px;top:230px;" width="28" height="28" viewBox="0 0 28 28" fill="none"><circle cx="9" cy="9" r="3.4" stroke="#27272a" stroke-width="2"/><path d="M12.4 9 H23" stroke="#27272a" stroke-width="2"/><circle cx="19" cy="19" r="3.4" stroke="#27272a" stroke-width="2"/><path d="M6 19 H15.6" stroke="#27272a" stroke-width="2"/></svg>
<div class="t" style="left:1491.00px;top:292.03px;font-size:25px;color:#09090b;font-weight:400;letter-spacing:0px;-webkit-text-stroke:0.2px #09090b;font-family:'Liberation Sans', sans-serif;">ExactMatch</div>
<div class="t" style="left:1640.00px;top:292.03px;font-size:25px;color:#71717a;font-weight:400;letter-spacing:0px;font-family:'Liberation Sans', sans-serif;">20</div>
<div class="t" style="left:1490.00px;top:331.91px;font-size:39.2px;color:#09090b;font-weight:400;letter-spacing:0.7px;-webkit-text-stroke:0.4px #09090b;font-family:'Liberation Sans', sans-serif;">90.00%</div>
<div class="b" style="left:2266px;top:346px;width:80px;height:12px;background:#dcdce0;border-radius:6px;overflow:hidden;"></div>
<div class="b" style="left:2266px;top:346px;width:72px;height:12px;background:#909098;border-radius:6px 0 0 6px;"></div>
<div class="b" style="left:2362px;top:328px;width:192px;height:48px;border:2px solid #e4e4e7;border-radius:12px;box-sizing:border-box;"></div>
<svg class="b" style="left:2376px;top:342px;" width="24" height="20" viewBox="0 0 24 20" fill="none"><path d="M2 3.7 H22 M6 9.7 H18 M9 15.8 H15" stroke="#71717a" stroke-width="2"/></svg>
<svg class="b" style="left:2452px;top:344px;" width="16" height="16" viewBox="0 0 16 16" fill="none"><path d="M3 13 L13 3 M5 3 H13 V11" stroke="#7fb98f" stroke-width="2"/></svg>
<div class="t" style="left:2472.50px;top:337.47px;font-size:28.5px;color:#15803d;font-weight:400;letter-spacing:0px;-webkit-text-stroke:0.5px #15803d;font-family:'Liberation Sans', sans-serif;">0</div>
<svg class="b" style="left:2502px;top:344px;" width="16" height="16" viewBox="0 0 16 16" fill="none"><path d="M3 3 L13 13 M13 5 V13 H5" stroke="#d97a98" stroke-width="2"/></svg>
<div class="t" style="left:2522.50px;top:337.47px;font-size:28.5px;color:#be123c;font-weight:400;letter-spacing:0px;-webkit-text-stroke:0.5px #be123c;font-family:'Liberation Sans', sans-serif;">0</div>
<div class="t" style="left:1490.50px;top:420.21px;font-size:24.2px;color:#71717a;font-weight:400;letter-spacing:0px;-webkit-text-stroke:0.2px #71717a;font-family:'Liberation Sans', sans-serif;">Avg</div>
<svg class="b" style="left:1539.5px;top:426.5px;" width="17" height="11" viewBox="0 0 17 11" fill="none"><path d="M2 2 L8.5 9 L15 2" stroke="#a1a1aa" stroke-width="2" stroke-linecap="round" stroke-linejoin="round"/></svg>
<div class="t" style="left:1576.5px;top:419.54px;font-size:25px;letter-spacing:0.25px;color:#09090b;-webkit-text-stroke:0.2px #09090b;">Duration<span style="color:#71717a;-webkit-text-stroke:0;margin-left:19px;">20</span></div>
<div class="t" style="left:1490.00px;top:464.01px;font-size:39.2px;color:#09090b;font-weight:400;letter-spacing:0.8px;-webkit-text-stroke:0.4px #09090b;font-family:'Liberation Sans', sans-serif;">1.08s</div>
<div class="b" style="left:2362px;top:460px;width:192px;height:48px;border:2px solid #e4e4e7;border-radius:12px;box-sizing:border-box;"></div>
<svg class="b" style="left:2376px;top:474px;" width="24" height="20" viewBox="0 0 24 20" fill="none"><path d="M2 3.7 H22 M6 9.7 H18 M9 15.8 H15" stroke="#71717a" stroke-width="2"/></svg>
<svg class="b" style="left:2452px;top:476px;" width="16" height="16" viewBox="0 0 16 16" fill="none"><path d="M3 13 L13 3 M5 3 H13 V11" stroke="#7fb98f" stroke-width="2"/></svg>
<div class="t" style="left:2472.50px;top:469.47px;font-size:28.5px;color:#15803d;font-weight:400;letter-spacing:0px;-webkit-text-stroke:0.5px #15803d;font-family:'Liberation Sans', sans-serif;">0</div>
<svg class="b" style="left:2502px;top:476px;" width="16" height="16" viewBox="0 0 16 16" fill="none"><path d="M3 3 L13 13 M13 5 V13 H5" stroke="#d97a98" stroke-width="2"/></svg>
<div class="t" style="left:2522.50px;top:469.47px;font-size:28.5px;color:#be123c;font-weight:400;letter-spacing:0px;-webkit-text-stroke:0.5px #be123c;font-family:'Liberation Sans', sans-serif;">0</div>
<div class="t" style="left:1490.50px;top:552.21px;font-size:24.2px;color:#71717a;font-weight:400;letter-spacing:0px;-webkit-text-stroke:0.2px #71717a;font-family:'Liberation Sans', sans-serif;">Avg</div>
<svg class="b" style="left:1539.5px;top:558.5px;" width="17" height="11" viewBox="0 0 17 11" fill="none"><path d="M2 2 L8.5 9 L15 2" stroke="#a1a1aa" stroke-width="2" stroke-linecap="round" stroke-linejoin="round"/></svg>
<div class="t" style="left:1576.5px;top:551.54px;font-size:25px;letter-spacing:0.25px;color:#09090b;-webkit-text-stroke:0.2px #09090b;">LLM duration<span style="color:#71717a;-webkit-text-stroke:0;margin-left:19px;">20</span></div>
<div class="t" style="left:1490.00px;top:596.01px;font-size:39.2px;color:#09090b;font-weight:400;letter-spacing:0.8px;-webkit-text-stroke:0.4px #09090b;font-family:'Liberation Sans', sans-serif;">1.04s</div>
<div class="b" style="left:2362px;top:592px;width:192px;height:48px;border:2px solid #e4e4e7;border-radius:12px;box-sizing:border-box;"></div>
<svg class="b" style="left:2376px;top:606px;" width="24" height="20" viewBox="0 0 24 20" fill="none"><path d="M2 3.7 H22 M6 9.7 H18 M9 15.8 H15" stroke="#71717a" stroke-width="2"/></svg>
<svg class="b" style="left:2452px;top:608px;" width="16" height="16" viewBox="0 0 16 16" fill="none"><path d="M3 13 L13 3 M5 3 H13 V11" stroke="#7fb98f" stroke-width="2"/></svg>
<div class="t" style="left:2472.50px;top:601.47px;font-size:28.5px;color:#15803d;font-weight:400;letter-spacing:0px;-webkit-text-stroke:0.5px #15803d;font-family:'Liberation Sans', sans-serif;">0</div>
<svg class="b" style="left:2502px;top:608px;" width="16" height="16" viewBox="0 0 16 16" fill="none"><path d="M3 3 L13 13 M13 5 V13 H5" stroke="#d97a98" stroke-width="2"/></svg>
<div class="t" style="left:2522.50px;top:601.47px;font-size:28.5px;color:#be123c;font-weight:400;letter-spacing:0px;-webkit-text-stroke:0.5px #be123c;font-family:'Liberation Sans', sans-serif;">0</div>
<div class="t" style="left:1490.50px;top:684.21px;font-size:24.2px;color:#71717a;font-weight:400;letter-spacing:0px;-webkit-text-stroke:0.2px #71717a;font-family:'Liberation Sans', sans-serif;">Avg</div>
<svg class="b" style="left:1539.5px;top:690.5px;" width="17" height="11" viewBox="0 0 17 11" fill="none"><path d="M2 2 L8.5 9 L15 2" stroke="#a1a1aa" stroke-width="2" stroke-linecap="round" stroke-linejoin="round"/></svg>
<div class="t" style="left:1576.5px;top:683.54px;font-size:25px;letter-spacing:0.25px;color:#09090b;-webkit-text-stroke:0.2px #09090b;">Prompt tokens<span style="color:#71717a;-webkit-text-stroke:0;margin-left:19px;">20</span></div>
<div class="t" style="left:1490.00px;top:728.01px;font-size:39.2px;color:#09090b;font-weight:400;letter-spacing:0.8px;-webkit-text-stroke:0.4px #09090b;font-family:'Liberation Sans', sans-serif;">62.55</div>
<div class="b" style="left:2362px;top:724px;width:192px;height:48px;border:2px solid #e4e4e7;border-radius:12px;box-sizing:border-box;"></div>
<svg class="b" style="left:2376px;top:738px;" width="24" height="20" viewBox="0 0 24 20" fill="none"><path d="M2 3.7 H22 M6 9.7 H18 M9 15.8 H15" stroke="#71717a" stroke-width="2"/></svg>
<svg class="b" style="left:2452px;top:740px;" width="16" height="16" viewBox="0 0 16 16" fill="none"><path d="M3 13 L13 3 M5 3 H13 V11" stroke="#7fb98f" stroke-width="2"/></svg>
<div class="t" style="left:2472.50px;top:733.47px;font-size:28.5px;color:#15803d;font-weight:400;letter-spacing:0px;-webkit-text-stroke:0.5px #15803d;font-family:'Liberation Sans', sans-serif;">0</div>
<svg class="b" style="left:2502px;top:740px;" width="16" height="16" viewBox="0 0 16 16" fill="none"><path d="M3 3 L13 13 M13 5 V13 H5" stroke="#d97a98" stroke-width="2"/></svg>
<div class="t" style="left:2522.50px;top:733.47px;font-size:28.5px;color:#be123c;font-weight:400;letter-spacing:0px;-webkit-text-stroke:0.5px #be123c;font-family:'Liberation Sans', sans-serif;">0</div>
<div class="t" style="left:1490.50px;top:816.21px;font-size:24.2px;color:#71717a;font-weight:400;letter-spacing:0px;-webkit-text-stroke:0.2px #71717a;font-family:'Liberation Sans', sans-serif;">Avg</div>
<svg class="b" style="left:1539.5px;top:822.5px;" width="17" height="11" viewBox="0 0 17 11" fill="none"><path d="M2 2 L8.5 9 L15 2" stroke="#a1a1aa" stroke-width="2" stroke-linecap="round" stroke-linejoin="round"/></svg>
<div class="t" style="left:1576.5px;top:815.54px;font-size:25px;letter-spacing:0.25px;color:#09090b;-webkit-text-stroke:0.2px #09090b;">Completion tokens<span style="color:#71717a;-webkit-text-stroke:0;margin-left:19px;">20</span></div>
<div class="t" style="left:1490.00px;top:860.01px;font-size:39.2px;color:#09090b;font-weight:400;letter-spacing:0.8px;-webkit-text-stroke:0.4px #09090b;font-family:'Liberation Sans', sans-serif;">3.80</div>
<div class="b" style="left:2362px;top:856px;width:192px;height:48px;border:2px solid #e4e4e7;border-radius:12px;box-sizing:border-box;"></div>
<svg class="b" style="left:2376px;top:870px;" width="24" height="20" viewBox="0 0 24 20" fill="none"><path d="M2 3.7 H22 M6 9.7 H18 M9 15.8 H15" stroke="#71717a" stroke-width="2"/></svg>
<svg class="b" style="left:2452px;top:872px;" width="16" height="16" viewBox="0 0 16 16" fill="none"><path d="M3 13 L13 3 M5 3 H13 V11" stroke="#7fb98f" stroke-width="2"/></svg>
<div class="t" style="left:2472.50px;top:865.47px;font-size:28.5px;color:#15803d;font-weight:400;letter-spacing:0px;-webkit-text-stroke:0.5px #15803d;font-family:'Liberation Sans', sans-serif;">0</div>
<svg class="b" style="left:2502px;top:872px;" width="16" height="16" viewBox="0 0 16 16" fill="none"><path d="M3 3 L13 13 M13 5 V13 H5" stroke="#d97a98" stroke-width="2"/></svg>
<div class="t" style="left:2522.50px;top:865.47px;font-size:28.5px;color:#be123c;font-weight:400;letter-spacing:0px;-webkit-text-stroke:0.5px #be123c;font-family:'Liberation Sans', sans-serif;">0</div>
<div class="t" style="left:1490.50px;top:948.21px;font-size:24.2px;color:#71717a;font-weight:400;letter-spacing:0px;-webkit-text-stroke:0.2px #71717a;font-family:'Liberation Sans', sans-serif;">Avg</div>
<svg class="b" style="left:1539.5px;top:954.5px;" width="17" height="11" viewBox="0 0 17 11" fill="none"><path d="M2 2 L8.5 9 L15 2" stroke="#a1a1aa" stroke-width="2" stroke-linecap="round" stroke-linejoin="round"/></svg>
<div class="t" style="left:1576.5px;top:947.54px;font-size:25px;letter-spacing:0.25px;color:#09090b;-webkit-text-stroke:0.2px #09090b;">Total tokens<span style="color:#71717a;-webkit-text-stroke:0;margin-left:19px;">20</span></div>
<div class="t" style="left:1490.00px;top:992.01px;font-size:39.2px;color:#09090b;font-weight:400;letter-spacing:0.8px;-webkit-text-stroke:0.4px #09090b;font-family:'Liberation Sans', sans-serif;">66.35</div>
<div class="b" style="left:2362px;top:988px;width:192px;height:48px;border:2px solid #e4e4e7;border-radius:12px;box-sizing:border-box;"></div>
<svg class="b" style="left:2376px;top:1002px;" width="24" height="20" viewBox="0 0 24 20" fill="none"><path d="M2 3.7 H22 M6 9.7 H18 M9 15.8 H15" stroke="#71717a" stroke-width="2"/></svg>
<svg class="b" style="left:2452px;top:1004px;" width="16" height="16" viewBox="0 0 16 16" fill="none"><path d="M3 13 L13 3 M5 3 H13 V11" stroke="#7fb98f" stroke-width="2"/></svg>
<div class="t" style="left:2472.50px;top:997.47px;font-size:28.5px;color:#15803d;font-weight:400;letter-spacing:0px;-webkit-text-stroke:0.5px #15803d;font-family:'Liberation Sans', sans-serif;">0</div>
<svg class="b" style="left:2502px;top:1004px;" width="16" height="16" viewBox="0 0 16 16" fill="none"><path d="M3 3 L13 13 M13 5 V13 H5" stroke="#d97a98" stroke-width="2"/></svg>
<div class="t" style="left:2522.50px;top:997.47px;font-size:28.5px;color:#be123c;font-weight:400;letter-spacing:0px;-webkit-text-stroke:0.5px #be123c;font-family:'Liberation Sans', sans-serif;">0</div>
<div class="t" style="left:1490.50px;top:1080.21px;font-size:24.2px;color:#71717a;font-weight:400;letter-spacing:0px;-webkit-text-stroke:0.2px #71717a;font-family:'Liberation Sans', sans-serif;">Avg</div>
<svg class="b" style="left:1539.5px;top:1086.5px;" width="17" height="11" viewBox="0 0 17 11" fill="none"><path d="M2 2 L8.5 9 L15 2" stroke="#a1a1aa" stroke-width="2" stroke-linecap="round" stroke-linejoin="round"/></svg>
<div class="t" style="left:1576.5px;top:1079.54px;font-size:25px;letter-spacing:0.25px;color:#09090b;-webkit-text-stroke:0.2px #09090b;">Estimated cost<span style="color:#71717a;-webkit-text-stroke:0;margin-left:19px;">20</span></div>
<div class="t" style="left:1490.00px;top:1124.01px;font-size:39.2px;color:#09090b;font-weight:400;letter-spacing:0.8px;-webkit-text-stroke:0.4px #09090b;font-family:'Liberation Sans', sans-serif;">&lt;$0.001</div>
<div class="b" style="left:2362px;top:1120px;width:192px;height:48px;border:2px solid #e4e4e7;border-radius:12px;box-sizing:border-box;"></div>
<svg class="b" style="left:2376px;top:1134px;" width="24" height="20" viewBox="0 0 24 20" fill="none"><path d="M2 3.7 H22 M6 9.7 H18 M9 15.8 H15" stroke="#71717a" stroke-width="2"/></svg>
<svg class="b" style="left:2452px;top:1136px;" width="16" height="16" viewBox="0 0 16 16" fill="none"><path d="M3 13 L13 3 M5 3 H13 V11" stroke="#7fb98f" stroke-width="2"/></svg>
<div class="t" style="left:2472.50px;top:1129.47px;font-size:28.5px;color:#15803d;font-weight:400;letter-spacing:0px;-webkit-text-stroke:0.5px #15803d;font-family:'Liberation Sans', sans-serif;">0</div>
<svg class="b" style="left:2502px;top:1136px;" width="16" height="16" viewBox="0 0 16 16" fill="none"><path d="M3 3 L13 13 M13 5 V13 H5" stroke="#d97a98" stroke-width="2"/></svg>
<div class="t" style="left:2522.50px;top:1129.47px;font-size:28.5px;color:#be123c;font-weight:400;letter-spacing:0px;-webkit-text-stroke:0.5px #be123c;font-family:'Liberation Sans', sans-serif;">0</div>
<div class="t" style="left:1491.00px;top:1273.98px;font-size:28.6px;color:#52525b;font-weight:400;letter-spacing:0px;font-family:'Liberation Sans', sans-serif;">Experiment metadata</div>
<div class="b" style="left:1490px;top:1324px;width:1064px;height:276px;border:2px solid #e4e4e7;border-radius:14px;background:#fafafa;box-sizing:border-box;"></div>
<div class="b" style="left:1500px;top:1342px;width:126px;height:40px;border:2px solid #e4e4e7;border-radius:8px;box-sizing:border-box;"></div>
<div class="t" style="left:1514.50px;top:1350.81px;font-size:24.2px;color:#3f3f46;font-weight:400;letter-spacing:0px;-webkit-text-stroke:0.45px #3f3f46;font-family:'Liberation Sans', sans-serif;">YAML</div>
<svg class="b" style="left:1591px;top:1356.5px;" width="17" height="11" viewBox="0 0 17 11" fill="none"><path d="M2 2 L8.5 9 L15 2" stroke="#a1a1aa" stroke-width="2" stroke-linecap="round" stroke-linejoin="round"/></svg>
<div class="t" style="left:1511.50px;top:1420.08px;font-size:24.7px;color:#a1a1aa;font-weight:400;letter-spacing:0px;font-family:'Liberation Mono', monospace;">1</div>
<div class="t" style="left:1575.00px;top:1420.08px;font-size:24.7px;color:#27272a;font-weight:400;letter-spacing:0px;font-family:'Liberation Mono', monospace;white-space:pre;"><span style="color:#6b50c0">model</span>: gpt-4o</div>
<div class="t" style="left:1511.50px;top:1453.48px;font-size:24.7px;color:#a1a1aa;font-weight:400;letter-spacing:0px;font-family:'Liberation Mono', monospace;">2</div>
<div class="t" style="left:1575.00px;top:1453.48px;font-size:24.7px;color:#27272a;font-weight:400;letter-spacing:0px;font-family:'Liberation Mono', monospace;white-space:pre;"><span style="color:#6b50c0">dataset</span>: Opened-movie matcher-35a65af8 dataset.csv 1724978974907</div>
<div class="t" style="left:1511.50px;top:1486.88px;font-size:24.7px;color:#a1a1aa;font-weight:400;letter-spacing:0px;font-family:'Liberation Mono', monospace;">3</div>
<div class="t" style="left:1575.00px;top:1486.88px;font-size:24.7px;color:#27272a;font-weight:400;letter-spacing:0px;font-family:'Liberation Mono', monospace;white-space:pre;"><span style="color:#6b50c0">use_cache</span>: true</div>
<div class="t" style="left:1511.50px;top:1520.28px;font-size:24.7px;color:#a1a1aa;font-weight:400;letter-spacing:0px;font-family:'Liberation Mono', monospace;">4</div>
<div class="t" style="left:1575.00px;top:1520.28px;font-size:24.7px;color:#27272a;font-weight:400;letter-spacing:0px;font-family:'Liberation Mono', monospace;white-space:pre;"><span style="color:#6b50c0">max_tokens</span>: 1024</div>
<div class="t" style="left:1511.50px;top:1553.68px;font-size:24.7px;color:#a1a1aa;font-weight:400;letter-spacing:0px;font-family:'Liberation Mono', monospace;">5</div>
<div class="t" style="left:1575.00px;top:1553.68px;font-size:24.7px;color:#27272a;font-weight:400;letter-spacing:0px;font-family:'Liberation Mono', monospace;white-space:pre;"><span style="color:#6b50c0">temperature</span>: 0</div>
</div></body></html>
